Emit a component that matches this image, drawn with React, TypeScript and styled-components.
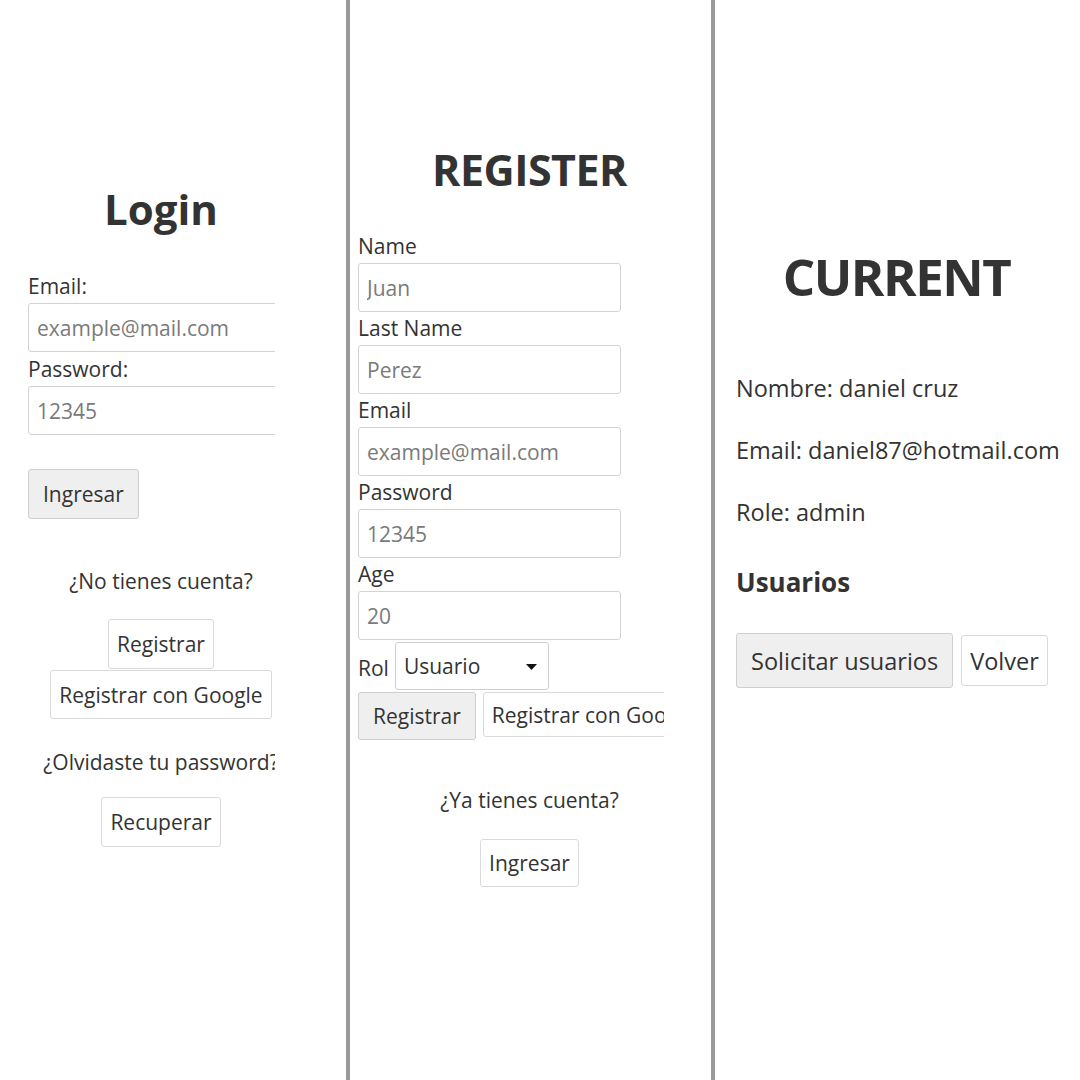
import React from "react";
import styled, { createGlobalStyle } from "styled-components";

const GlobalStyle = createGlobalStyle`
  html, body { margin: 0; padding: 0; background: #fff; }
  body { font-family: "Open Sans", "Noto Sans", sans-serif; color: #333; }
  *, *::before, *::after { box-sizing: border-box; }
`;

const Screen = styled.div`
  display: flex;
  width: 1080px;
  height: 1080px;
  overflow: hidden;
  background: #fff;
`;

const Panel = styled.section<{ $width: number; $divider?: boolean; $padLeft: number; $padTop: number; $font: number }>`
  flex: 0 0 ${(p) => p.$width}px;
  height: 100%;
  border-left: ${(p) => (p.$divider ? "4px solid #999" : "none")};
  padding: ${(p) => p.$padTop}px 0 0 ${(p) => p.$padLeft}px;
  font-size: ${(p) => p.$font}px;
  overflow: hidden;
`;

const Clip = styled.div<{ $width: number }>`
  width: ${(p) => p.$width}px;
  overflow: hidden;
`;

const Inner = styled.div<{ $width: number }>`
  width: ${(p) => p.$width}px;
  display: flex;
  flex-direction: column;
  align-items: flex-start;
`;

const Title = styled.h1<{ $size: number; $lh: number; $mb: number; $ls?: number }>`
  align-self: stretch;
  margin: 0 0 ${(p) => p.$mb}px;
  text-align: center;
  font-size: ${(p) => p.$size}px;
  line-height: ${(p) => p.$lh}px;
  letter-spacing: ${(p) => p.$ls ?? 0}px;
  font-weight: 700;
  color: #333;
`;

const Label = styled.label`
  display: block;
  line-height: 25px;
  margin-bottom: 4px;
`;

const TextInput = styled.input<{ $width: number; $mb?: number }>`
  display: block;
  width: ${(p) => p.$width}px;
  height: 49px;
  margin: 0 0 ${(p) => p.$mb ?? 4}px;
  padding: 0 8px;
  border: 1px solid #d3d3d3;
  border-radius: 3px;
  font: inherit;
  color: #333;
  background: #fff;
  &::placeholder { color: #7a7a7a; }
`;

const Button = styled.button<{ $primary?: boolean; $h: number; $mt?: number; $center?: boolean }>`
  display: inline-flex;
  align-items: center;
  justify-content: center;
  flex: none;
  white-space: nowrap;
  height: ${(p) => p.$h}px;
  margin: ${(p) => p.$mt ?? 0}px 0 0;
  align-self: ${(p) => (p.$center ? "center" : "auto")};
  padding: 0 ${(p) => (p.$primary ? 14 : 8)}px;
  font: inherit;
  color: #333;
  background: ${(p) => (p.$primary ? "#efefef" : "#fff")};
  border: 1px solid ${(p) => (p.$primary ? "#cfcfcf" : "#dadada")};
  border-radius: 3px;
  cursor: pointer;
`;

const Prompt = styled.p<{ $mt: number }>`
  align-self: stretch;
  margin: ${(p) => p.$mt}px 0 0;
  text-align: center;
  line-height: 25px;
  white-space: nowrap;
`;

const RolRow = styled.div`
  display: flex;
  align-items: center;
  gap: 6px;
  height: 48px;
  margin-top: 1px;
`;

const RolText = styled.span`
  line-height: 25px;
  padding-top: 4px;
`;

const SelectBox = styled.div`
  position: relative;
  width: 154px;
  height: 48px;
`;

const Select = styled.select`
  appearance: none;
  -webkit-appearance: none;
  width: 100%;
  height: 100%;
  padding: 0 30px 0 8px;
  font: inherit;
  color: #333;
  background: #fff;
  border: 1px solid #cfcfcf;
  border-radius: 3px;
`;

const Arrow = styled.svg`
  position: absolute;
  right: 12px;
  top: 22px;
  pointer-events: none;
`;

const ButtonRow = styled.div<{ $mt: number; $gap: number; $align?: string }>`
  display: flex;
  align-items: ${(p) => p.$align ?? "flex-start"};
  gap: ${(p) => p.$gap}px;
  margin-top: ${(p) => p.$mt}px;
`;

const Info = styled.p<{ $mt?: number }>`
  margin: ${(p) => p.$mt ?? 0}px 0 34px;
  line-height: 28px;
  white-space: nowrap;
`;

const SubTitle = styled.h3`
  margin: 5px 0 0;
  font-size: 26px;
  line-height: 34px;
  font-weight: 700;
`;

export default function App() {
  return (
    <>
      <GlobalStyle />
      <Screen>
        <Panel $width={346} $padLeft={28} $padTop={179} $font={21}>
          <Clip $width={247}>
            <Inner $width={266}>
              <Title $size={42} $lh={60} $mb={35}>Login</Title>
              <Label htmlFor="l-email">Email:</Label>
              <TextInput id="l-email" $width={266} $mb={5} placeholder="example@mail.com" />
              <Label htmlFor="l-pass">Password:</Label>
              <TextInput id="l-pass" $width={266} $mb={0} placeholder="12345" />
              <Button $primary $h={50} $mt={34}>Ingresar</Button>
              <Prompt $mt={50}>¿No tienes cuenta?</Prompt>
              <Button $h={50} $mt={25} $center>Registrar</Button>
              <Button $h={49} $mt={1} $center>Registrar con Google</Button>
              <Prompt $mt={31}>¿Olvidaste tu password?</Prompt>
              <Button $h={50} $mt={22} $center>Recuperar</Button>
            </Inner>
          </Clip>
        </Panel>

        <Panel $width={365} $divider $padLeft={8} $padTop={140} $font={21}>
          <Clip $width={306}>
            <Inner $width={343}>
              <Title $size={43} $lh={60} $mb={34} $ls={-0.5}>REGISTER</Title>
              <Label htmlFor="r-name">Name</Label>
              <TextInput id="r-name" $width={263} placeholder="Juan" />
              <Label htmlFor="r-last">Last Name</Label>
              <TextInput id="r-last" $width={263} placeholder="Perez" />
              <Label htmlFor="r-email">Email</Label>
              <TextInput id="r-email" $width={263} placeholder="example@mail.com" />
              <Label htmlFor="r-pass">Password</Label>
              <TextInput id="r-pass" $width={263} placeholder="12345" />
              <Label htmlFor="r-age">Age</Label>
              <TextInput id="r-age" $width={263} $mb={1} placeholder="20" />
              <RolRow>
                <RolText>Rol</RolText>
                <SelectBox>
                  <Select defaultValue="usuario">
                    <option value="usuario">Usuario</option>
                    <option value="admin">Admin</option>
                  </Select>
                  <Arrow width="11" height="6" viewBox="0 0 11 6">
                    <path d="M0 0 H11 L5.5 6 Z" fill="#111" />
                  </Arrow>
                </SelectBox>
              </RolRow>
              <ButtonRow $mt={2} $gap={7}>
                <Button $primary $h={48}>Registrar</Button>
                <Button $h={45}>Registrar con Google</Button>
              </ButtonRow>
              <Prompt $mt={48}>¿Ya tienes cuenta?</Prompt>
              <Button $h={48} $mt={26} $center>Ingresar</Button>
            </Inner>
          </Clip>
        </Panel>

        <Panel $width={369} $divider $padLeft={21} $padTop={241} $font={23.5}>
          <Inner $width={321}>
            <Title $size={51} $lh={70} $mb={63} $ls={-1.5}>CURRENT</Title>
            <Info>Nombre: daniel cruz</Info>
            <Info>Email: daniel87@hotmail.com</Info>
            <Info>Role: admin</Info>
            <SubTitle>Usuarios</SubTitle>
            <ButtonRow $mt={34} $gap={8} $align="center">
              <Button $primary $h={55}>Solicitar usuarios</Button>
              <Button $h={51}>Volver</Button>
            </ButtonRow>
          </Inner>
        </Panel>
      </Screen>
    </>
  );
}
